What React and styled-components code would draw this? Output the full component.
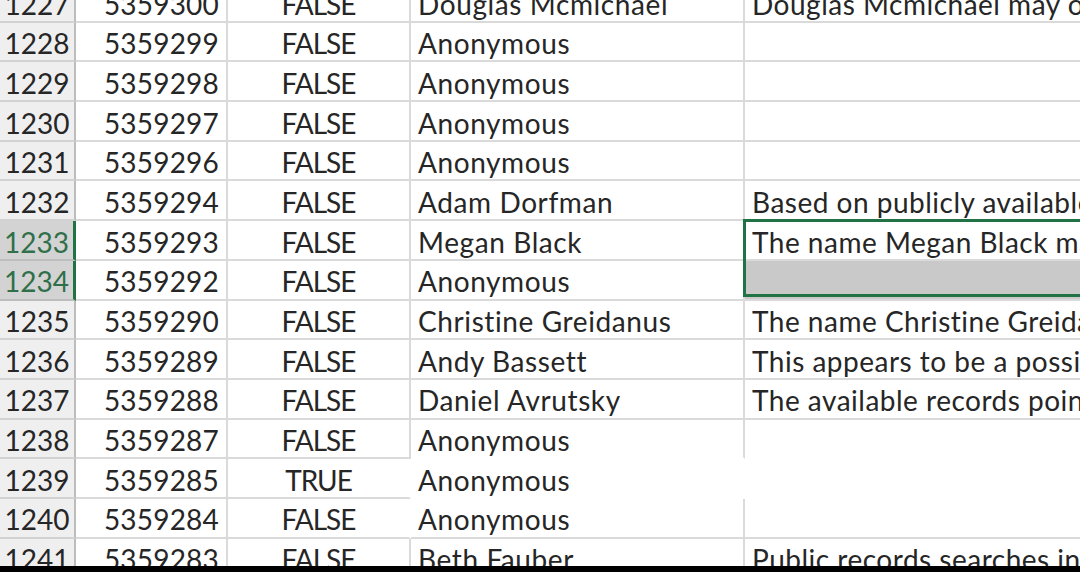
import React from "react";
import styled, { createGlobalStyle } from "styled-components";

const GlobalStyle = createGlobalStyle`
  body {
    margin: 0;
    background: #000;
    overflow: hidden;
    font-family: "Lato", "Open Sans", sans-serif;
  }
`;

const rows = [
  { n: 1227, id: "5359300", flag: "FALSE", name: "Douglas Mcmichael", note: "Douglas Mcmichael may or may not be a public figure" },
  { n: 1228, id: "5359299", flag: "FALSE", name: "Anonymous", note: "" },
  { n: 1229, id: "5359298", flag: "FALSE", name: "Anonymous", note: "" },
  { n: 1230, id: "5359297", flag: "FALSE", name: "Anonymous", note: "" },
  { n: 1231, id: "5359296", flag: "FALSE", name: "Anonymous", note: "" },
  { n: 1232, id: "5359294", flag: "FALSE", name: "Adam Dorfman", note: "Based on publicly available information" },
  { n: 1233, id: "5359293", flag: "FALSE", name: "Megan Black", note: "The name Megan Black may refer to several people", active: true },
  { n: 1234, id: "5359292", flag: "FALSE", name: "Anonymous", note: "", shaded: true },
  { n: 1235, id: "5359290", flag: "FALSE", name: "Christine Greidanus", note: "The name Christine Greidanus appears in" },
  { n: 1236, id: "5359289", flag: "FALSE", name: "Andy Bassett", note: "This appears to be a possible match" },
  { n: 1237, id: "5359288", flag: "FALSE", name: "Daniel Avrutsky", note: "The available records point to" },
  { n: 1238, id: "5359287", flag: "FALSE", name: "Anonymous", note: "", openC: true, openD: true },
  { n: 1239, id: "5359285", flag: "TRUE", name: "Anonymous", note: "", openB: true, openC: true, openCRight: true, openD: true },
  { n: 1240, id: "5359284", flag: "FALSE", name: "Anonymous", note: "", openB: true },
  { n: 1241, id: "5359283", flag: "FALSE", name: "Beth Fauber", note: "Public records searches indicate" },
];

const Sheet = styled.div`
  height: 566px;
  overflow: hidden;
  background: #fff;
`;

const Grid = styled.div`
  display: grid;
  grid-template-columns: 76px 152px 183px 334px 1fr;
  grid-auto-rows: 39.7px;
  margin-top: -17px;
`;

const Cell = styled.div`
  display: flex;
  align-items: center;
  box-sizing: border-box;
  padding: 5px 7px 0;
  font-size: 28px;
  line-height: 1.2;
  color: #262626;
  white-space: nowrap;
  overflow: hidden;
  letter-spacing: ${(p) => p.$spacing || "0"};
  border-bottom: 2px solid ${(p) => (p.$noBottom ? "transparent" : "#dadada")};
  border-right: 2px solid ${(p) => (p.$noRight ? "transparent" : "#dadada")};
  justify-content: ${(p) => p.$align || "flex-start"};
  background: ${(p) => (p.$shaded ? "#c9c9c9" : "#fff")};
`;

const RowHead = styled(Cell)`
  justify-content: center;
  padding: 5px 0 0;
  background: ${(p) => (p.$selected ? "#d3d3d3" : "#efefef")};
  color: ${(p) => (p.$selected ? "#2f6f4a" : "#262626")};
  border-bottom-color: ${(p) => (p.$selected ? "#bdbdbd" : "#d2d2d2")};
  border-right: ${(p) =>
    p.$selected ? "3px solid #217346" : "2px solid #bcbcbc"};
`;

const NoteCell = styled(Cell)`
  overflow: visible;
  position: relative;
  z-index: ${(p) => (p.$active ? 2 : 0)};
  &::after {
    content: "";
    display: ${(p) => (p.$active ? "block" : "none")};
    position: absolute;
    left: -2px;
    top: -2px;
    right: -6px;
    height: calc(200% + 2px);
    border: 3px solid #217346;
    box-sizing: border-box;
    pointer-events: none;
  }
`;

const Clip = styled.div`
  overflow: hidden;
  width: 100%;
`;

const Letterbox = styled.div`
  height: 6px;
  background: #000;
`;

export default function App() {
  return (
    <>
      <GlobalStyle />
      <Sheet>
        <Grid>
          {rows.map((r) => {
            const selected = r.n === 1233 || r.n === 1234;
            return (
              <React.Fragment key={r.n}>
                <RowHead $selected={selected}>{r.n}</RowHead>
                <Cell $align="flex-end" $spacing="0.2px">{r.id}</Cell>
                <Cell $align="center" $spacing="-1px" $noRight={r.openB}>
                  {r.flag}
                </Cell>
                <Cell
                  $spacing="0.6px"
                  $noBottom={r.openC}
                  $noRight={r.openCRight}
                >
                  {r.name}
                </Cell>
                <NoteCell
                  $spacing="0.5px"
                  $active={r.active}
                  $shaded={r.shaded}
                  $noBottom={r.openD}
                >
                  <Clip>{r.note}</Clip>
                </NoteCell>
              </React.Fragment>
            );
          })}
        </Grid>
      </Sheet>
      <Letterbox />
    </>
  );
}
